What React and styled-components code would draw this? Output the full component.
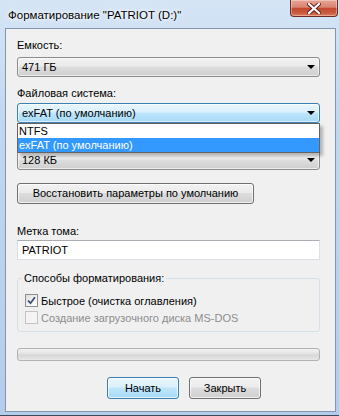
import React from 'react'
import styled, { createGlobalStyle } from 'styled-components'

const GlobalStyle = createGlobalStyle`
  html, body {
    margin: 0;
    padding: 0;
  }
  body {
    font-family: "Liberation Sans", Arial, sans-serif;
    font-size: 11px;
    color: #000;
  }
`

const Window = styled.div`
  width: 339px;
  height: 416px;
  box-sizing: border-box;
  display: flex;
  flex-direction: column;
  padding: 0 3px 3px 5px;
  background: linear-gradient(to bottom, #d5e5f6 0%, #c1d7ef 30%, #b3cdea 100%);
  border-bottom: 1px solid #3d4a5a;
  overflow: hidden;
`

const TitleBar = styled.div`
  height: 28px;
  flex: none;
  display: flex;
  justify-content: space-between;
  align-items: flex-start;
`

const Title = styled.div`
  padding: 8px 0 0 3px;
  font-size: 11.5px;
  line-height: 15px;
  text-shadow: 0 0 6px #fff, 0 0 3px #fff;
`

const CloseButton = styled.div`
  width: 48px;
  height: 17px;
  box-sizing: border-box;
  margin-right: -2px;
  display: flex;
  align-items: center;
  justify-content: center;
  border: 1px solid #6d2a25;
  border-top: none;
  border-radius: 0 0 4px 4px;
  background: linear-gradient(to bottom, #e8a596 0%, #d98472 45%, #c34a30 52%, #c85a3d 80%, #e07c5c 100%);
  box-shadow: inset 0 0 0 1px rgba(255, 255, 255, 0.35);
`

const Panel = styled.div`
  flex: 1;
  display: flex;
  flex-direction: column;
  background: #f0f0f0;
  border: 1px solid #8396ad;
  padding: 9px 15px 0 11px;
`

const Label = styled.div`
  line-height: 15px;
  margin: ${p => p.$top || 0}px 0 ${p => p.$gap ?? 4}px;
`

const Field = styled.div`
  position: relative;
  display: flex;
  flex-direction: column;
`

const Combo = styled.div`
  height: 20px;
  box-sizing: border-box;
  display: flex;
  align-items: center;
  justify-content: space-between;
  margin-top: ${p => p.$top || 0}px;
  padding: 0 4px 0 4px;
  border: 1px solid ${p => (p.$focused ? '#3c7fb1' : '#8b8b8b')};
  border-radius: 3px;
  background: ${p =>
    p.$focused
      ? 'linear-gradient(to bottom, #eaf6fd 0%, #d9f0fc 45%, #bee6fd 50%, #a7d9f5 100%)'
      : 'linear-gradient(to bottom, #f2f2f2 0%, #ebebeb 45%, #dddddd 50%, #cfcfcf 100%)'};
  box-shadow: inset 0 0 0 1px rgba(255, 255, 255, 0.6);
  line-height: 13px;
  white-space: nowrap;
`

const Arrow = styled.span`
  width: 0;
  height: 0;
  border-left: 4px solid transparent;
  border-right: 4px solid transparent;
  border-top: 4px solid #000;
`

const DropList = styled.ul`
  position: absolute;
  left: 0;
  right: 0;
  top: 100%;
  z-index: 2;
  margin: 0;
  padding: 0;
  list-style: none;
  background: #fff;
  border: 1px solid #646464;
  box-shadow: 3px 3px 3px rgba(0, 0, 0, 0.25);
`

const DropItem = styled.li`
  height: 14px;
  line-height: 14px;
  padding-left: 1px;
  background: ${p => (p.$active ? '#3399ff' : 'transparent')};
  color: ${p => (p.$active ? '#fff' : '#000')};
`

const Button = styled.div`
  height: ${p => p.$height || 22}px;
  box-sizing: border-box;
  display: flex;
  align-items: center;
  justify-content: center;
  width: ${p => p.$width}px;
  margin-top: ${p => p.$top || 0}px;
  border: 1px solid ${p => (p.$default ? '#3c7fb1' : '#707070')};
  border-radius: 3px;
  background: ${p =>
    p.$default
      ? 'linear-gradient(to bottom, #eaf6fd 0%, #d9f0fc 45%, #bee6fd 50%, #a7d9f5 100%)'
      : 'linear-gradient(to bottom, #f2f2f2 0%, #ebebeb 45%, #dddddd 50%, #cfcfcf 100%)'};
  box-shadow: inset 0 0 0 1px rgba(255, 255, 255, 0.7);
  line-height: 15px;
  white-space: nowrap;
`

const TextInput = styled.div`
  height: 20px;
  box-sizing: border-box;
  display: flex;
  align-items: center;
  padding-left: 4px;
  background: #fff;
  border: 1px solid #dbdfe6;
  border-top-color: #abadb3;
  line-height: 15px;
`

const GroupBox = styled.fieldset`
  margin: 11px 0 0;
  padding: 6px 0 5px 7px;
  border: 1px solid #d5dfe5;
  border-radius: 3px;
`

const Legend = styled.legend`
  padding: 0 2px;
  margin-left: -3px;
  line-height: 15px;
`

const CheckRow = styled.div`
  display: flex;
  align-items: center;
  gap: 3px;
  height: 17px;
  white-space: nowrap;
  color: ${p => (p.$disabled ? '#8d8d8d' : '#000')};
`

const Box = styled.span`
  width: 13px;
  height: 13px;
  box-sizing: border-box;
  display: flex;
  align-items: center;
  justify-content: center;
  border: 1px solid ${p => (p.$disabled ? '#c4c4c4' : '#8e8f8f')};
  background: ${p =>
    p.$disabled
      ? '#f4f4f4'
      : 'linear-gradient(135deg, #dcdcdc 0%, #f4f4f4 60%, #ffffff 100%)'};
`

const Progress = styled.div`
  height: 13px;
  margin-top: 16px;
  box-sizing: border-box;
  border: 1px solid #b2b2b2;
  border-radius: 3px;
  background: linear-gradient(to bottom, #f3f3f3 0%, #e2e2e2 45%, #d6d6d6 55%, #e8e8e8 100%);
`

const ButtonRow = styled.div`
  display: flex;
  gap: 10px;
  margin-top: 16px;
  padding-left: 90px;
`

const CheckMark = () => (
  <svg width="9" height="9" viewBox="0 0 9 9">
    <path d="M1 4.5 L3.5 7.2 L8 1.2" fill="none" stroke="#3c4e73" strokeWidth="1.8" />
  </svg>
)

const CloseGlyph = () => (
  <svg width="14" height="11" viewBox="0 0 14 11">
    <path d="M2 1 L12 10 M12 1 L2 10" stroke="#5b1e18" strokeWidth="4" strokeLinecap="square" />
    <path d="M2 1 L12 10 M12 1 L2 10" stroke="#fff" strokeWidth="2.2" strokeLinecap="square" />
  </svg>
)

export default function App() {
  return (
    <>
      <GlobalStyle />
      <Window>
        <TitleBar>
          <Title>Форматирование "PATRIOT (D:)"</Title>
          <CloseButton>
            <CloseGlyph />
          </CloseButton>
        </TitleBar>
        <Panel>
          <Label>Емкость:</Label>
          <Combo>
            471 ГБ
            <Arrow />
          </Combo>

          <Label $top={9} $gap={2}>Файловая система:</Label>
          <Field>
            <Combo $focused>
              exFAT (по умолчанию)
              <Arrow />
            </Combo>
            <DropList>
              <DropItem>NTFS</DropItem>
              <DropItem $active>exFAT (по умолчанию)</DropItem>
            </DropList>
          </Field>

          <Combo $top={27}>
            128 КБ
            <Arrow />
          </Combo>

          <Button $width={237} $height={21} $top={13}>
            Восстановить параметры по умолчанию
          </Button>

          <Label $top={20} $gap={1}>Метка тома:</Label>
          <TextInput>PATRIOT</TextInput>

          <GroupBox>
            <Legend>Способы форматирования:</Legend>
            <CheckRow>
              <Box>
                <CheckMark />
              </Box>
              Быстрое (очистка оглавления)
            </CheckRow>
            <CheckRow $disabled>
              <Box $disabled />
              Создание загрузочного диска MS-DOS
            </CheckRow>
          </GroupBox>

          <Progress />

          <ButtonRow>
            <Button $width={72} $default>Начать</Button>
            <Button $width={72}>Закрыть</Button>
          </ButtonRow>
        </Panel>
      </Window>
    </>
  )
}
